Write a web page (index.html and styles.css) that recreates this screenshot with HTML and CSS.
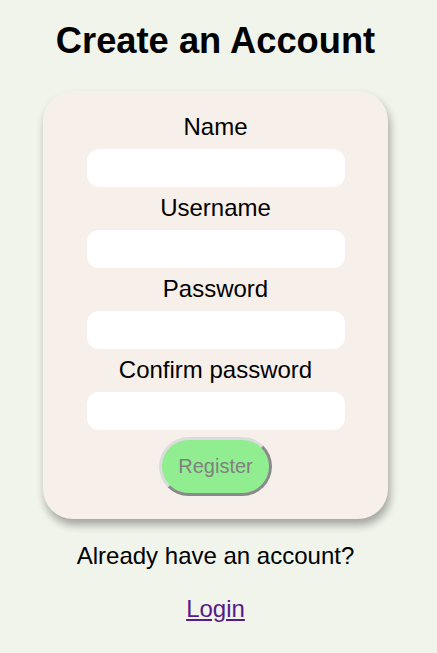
FILE: index.html
```html
<!DOCTYPE html>
<html lang="en">
<head>
<meta charset="utf-8">
<title>Create an Account</title>
<link rel="stylesheet" href="styles.css">
</head>
<body>
<main class="page">
  <h1 class="title">Create an Account</h1>
  <form class="card">
    <label class="label" for="name">Name</label>
    <input class="field" id="name" type="text">
    <label class="label" for="username">Username</label>
    <input class="field" id="username" type="text">
    <label class="label" for="password">Password</label>
    <input class="field" id="password" type="password">
    <label class="label" for="confirm">Confirm password</label>
    <input class="field" id="confirm" type="password">
    <button class="register" type="button">Register</button>
  </form>
  <p class="note">Already have an account?</p>
  <a class="login" href="#">Login</a>
</main>
</body>
</html>
```

FILE: styles.css
```css
html, body {
  margin: 0;
  padding: 0;
  background: #f1f4eb;
}

body {
  font-family: "Liberation Sans", Arial, sans-serif;
  color: #000;
}

.page {
  width: 431px;
  display: flex;
  flex-direction: column;
  align-items: center;
}

.title {
  margin: 20px 0 0;
  font-size: 36.3px;
  font-weight: bold;
  line-height: 41px;
}

.card {
  margin-top: 30px;
  width: 345px;
  box-sizing: border-box;
  padding: 22px 0 23px;
  background: #f7f0ea;
  border-radius: 30px;
  box-shadow: 2px 6px 9px rgba(0, 0, 0, 0.33);
  display: flex;
  flex-direction: column;
  align-items: center;
  gap: 8px;
}

.label {
  font-size: 24px;
  line-height: 27px;
  margin-bottom: 1px;
}

.field {
  width: 258px;
  height: 38px;
  box-sizing: border-box;
  border: none;
  border-radius: 12px;
  background: #fff;
  margin: 0 0 -1px 0;
  padding: 0 10px;
  font-size: 16px;
}

.register {
  margin: 0;
  height: 59px;
  box-sizing: border-box;
  padding: 0 16px;
  border-width: 3px;
  border-style: solid;
  border-color: #dcdcdc #8a8a8a #8a8a8a #dcdcdc;
  border-radius: 30px;
  background: #90ee90;
  color: #808080;
  font-family: "Liberation Sans", Arial, sans-serif;
  font-size: 20px;
  line-height: 23px;
}

.note {
  margin: 23px 0 0;
  font-size: 24px;
  line-height: 28px;
}

.login {
  margin-top: 25px;
  font-size: 24px;
  line-height: 28px;
  color: #551a8b;
  text-decoration: underline;
}
```
